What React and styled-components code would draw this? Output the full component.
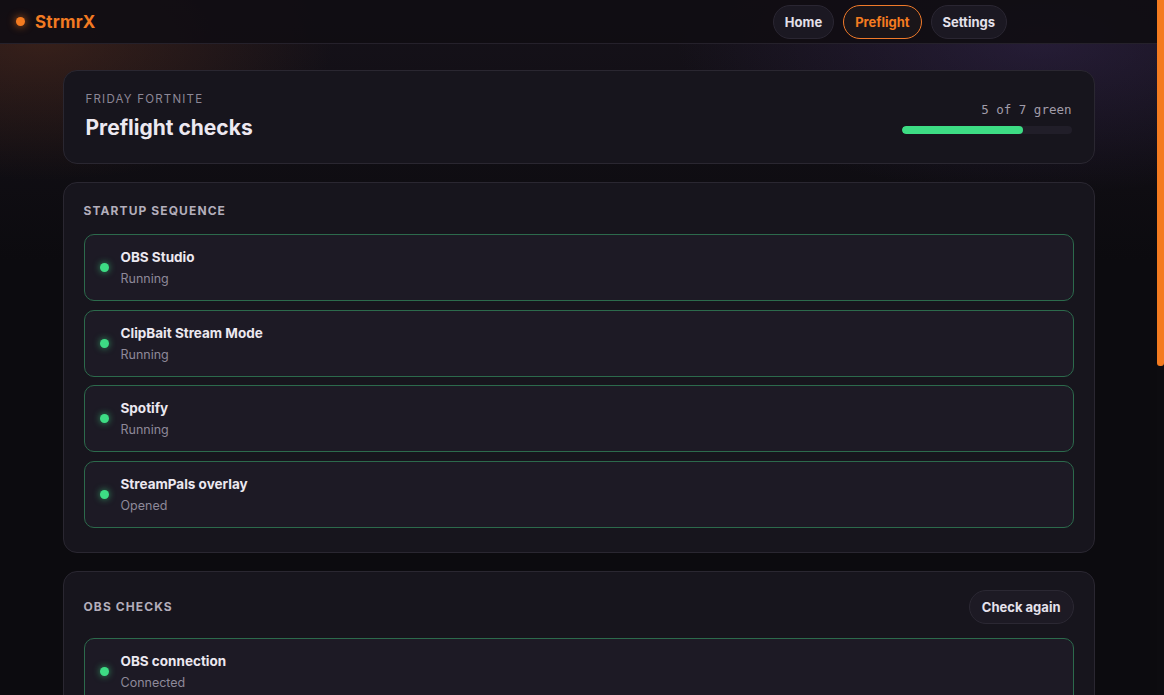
import React from "react";
import styled, { createGlobalStyle } from "styled-components";

const Global = createGlobalStyle`
  html, body { margin: 0; height: 100%; overflow: hidden; background: #0c0b0f; }
  body {
    font-family: Inter, "Liberation Sans", sans-serif;
    color: #ece8f0;
  }
  * { box-sizing: border-box; }
`;

const Frame = styled.div`
  display: flex;
  height: 100vh;
`;

const Shell = styled.div`
  flex: 1;
  min-width: 0;
  overflow-y: auto;
  scrollbar-width: none;
  &::-webkit-scrollbar { display: none; }
  background:
    radial-gradient(ellipse 420px 200px at 40px 40px, rgba(120, 60, 30, 0.35), transparent 70%),
    radial-gradient(ellipse 520px 220px at 1040px 40px, rgba(70, 50, 110, 0.35), transparent 70%),
    linear-gradient(180deg, #16121a 0px, #0c0b0f 260px, #0c0b0f 100%);
`;

const Rail = styled.div`
  width: 7px;
  flex: none;
  background: #0d0c10;
`;

const Thumb = styled.div`
  height: 366px;
  background: #f47b20;
  border-radius: 0 0 3px 3px;
`;

const Header = styled.header`
  height: 44px;
  display: flex;
  align-items: center;
  padding: 0 16px;
  background: rgba(16, 13, 18, 0.92);
  border-bottom: 1px solid #25212b;
`;

const Brand = styled.div`
  display: flex;
  align-items: center;
  gap: 10px;
  font-weight: 700;
  font-size: 17px;
  color: #f27a22;
  letter-spacing: 0.2px;
`;

const BrandDot = styled.span`
  width: 9px;
  height: 9px;
  border-radius: 50%;
  background: #f47b20;
  box-shadow: 0 0 8px rgba(244, 123, 32, 0.8);
`;

const Nav = styled.nav`
  margin-left: auto;
  margin-right: 134px;
  display: flex;
  gap: 9px;
`;

const NavButton = styled.button`
  height: 34px;
  padding: 0 11px;
  border-radius: 17px;
  font-family: inherit;
  font-size: 13px;
  font-weight: 700;
  cursor: pointer;
  background: ${(p) => (p.$active ? "#1a1519" : "#1b1822")};
  color: ${(p) => (p.$active ? "#f47b20" : "#e4e0ea")};
  border: 1px solid ${(p) => (p.$active ? "#f07a2a" : "#2a2632")};
`;

const Main = styled.main`
  max-width: 1032px;
  margin: 0 auto;
  padding: 26px 0 40px;
  display: flex;
  flex-direction: column;
  gap: 18px;
`;

const Card = styled.section`
  background: #17151d;
  border: 1px solid #2a2731;
  border-radius: 14px;
  padding: ${(p) => p.$pad || "20px 20px 24.5px"};
`;

const HeroRow = styled.div`
  display: flex;
  justify-content: space-between;
  align-items: flex-end;
`;

const Eyebrow = styled.div`
  font-size: 11.5px;
  letter-spacing: 1.2px;
  color: #8c8796;
  text-transform: uppercase;
  margin-bottom: 9px;
`;

const Title = styled.h1`
  margin: 0;
  font-size: 21px;
  font-weight: 700;
  color: #ece8f0;
`;

const ProgressBox = styled.div`
  display: flex;
  flex-direction: column;
  align-items: flex-end;
  gap: 9px;
  padding-bottom: 6px;
`;

const ProgressText = styled.div`
  font-family: "DejaVu Sans Mono", "Liberation Mono", monospace;
  font-size: 12.5px;
  color: #a19ca9;
`;

const Track = styled.div`
  width: 170px;
  height: 8px;
  border-radius: 4px;
  background: #211e29;
  overflow: hidden;
`;

const Fill = styled.div`
  height: 100%;
  border-radius: 4px;
  background: #3ddc84;
`;

const SectionHead = styled.div`
  display: flex;
  justify-content: space-between;
  align-items: center;
  margin-bottom: ${(p) => (p.$withAction ? "14px" : "15px")};
  line-height: 16px;
`;

const SectionTitle = styled.h2`
  margin: 0;
  font-size: 12px;
  font-weight: 700;
  letter-spacing: 1.1px;
  text-transform: uppercase;
  color: #b3aebb;
`;

const GhostButton = styled.button`
  height: 34px;
  padding: 0 12px;
  border-radius: 17px;
  background: #1d1a24;
  border: 1px solid #2b2833;
  color: #e6e2ec;
  font-family: inherit;
  font-size: 13px;
  font-weight: 700;
  cursor: pointer;
`;

const List = styled.div`
  display: flex;
  flex-direction: column;
  gap: 8.5px;
`;

const colors = {
  ok: { dot: "#3ddc84", border: "#2c6a4c" },
  warn: { dot: "#f5b83d", border: "#6a5428" },
  bad: { dot: "#ef5a5a", border: "#6a2d33" },
};

const Item = styled.div`
  height: 67px;
  display: flex;
  align-items: center;
  gap: 12px;
  padding: 0 15px;
  background: #1d1a25;
  border: 1px solid ${(p) => colors[p.$state].border};
  border-radius: 10px;
`;

const Dot = styled.span`
  width: 9px;
  height: 9px;
  border-radius: 50%;
  flex: none;
  background: ${(p) => colors[p.$state].dot};
  box-shadow: 0 0 7px ${(p) => colors[p.$state].dot}aa;
`;

const ItemText = styled.div`
  display: flex;
  flex-direction: column;
  gap: 6px;
`;

const ItemTitle = styled.div`
  font-size: 13.5px;
  font-weight: 700;
  color: #ece8f0;
`;

const ItemSub = styled.div`
  font-size: 12.5px;
  color: #8e8999;
`;

const startup = [
  ["OBS Studio", "Running"],
  ["ClipBait Stream Mode", "Running"],
  ["Spotify", "Running"],
  ["StreamPals overlay", "Opened"],
];

const obs = [
  ["OBS connection", "Connected", "ok"],
  ["Scene “Fortnite Gameplay”", "Missing source: Game Capture", "warn"],
  ["Microphone", "Muted", "bad"],
];

const manual = [
  ["Water bottle filled", "Manual"],
  ["Phone on do not disturb", "Manual"],
  ["Stream title updated", "Manual"],
  ["Discord announcement posted", "Manual"],
];

function Row({ title, sub, state = "ok" }) {
  return (
    <Item $state={state}>
      <Dot $state={state} />
      <ItemText>
        <ItemTitle>{title}</ItemTitle>
        <ItemSub>{sub}</ItemSub>
      </ItemText>
    </Item>
  );
}

export default function App() {
  return (
    <Frame>
      <Global />
      <Shell>
        <Header>
          <Brand>
            <BrandDot />
            StrmrX
          </Brand>
          <Nav>
            <NavButton>Home</NavButton>
            <NavButton $active>Preflight</NavButton>
            <NavButton>Settings</NavButton>
          </Nav>
        </Header>
        <Main>
          <Card $pad="21px 22px 23px">
            <HeroRow>
              <div>
                <Eyebrow>Friday Fortnite</Eyebrow>
                <Title>Preflight checks</Title>
              </div>
              <ProgressBox>
                <ProgressText>5 of 7 green</ProgressText>
                <Track>
                  <Fill style={{ width: `${(5 / 7) * 100}%` }} />
                </Track>
              </ProgressBox>
            </HeroRow>
          </Card>
          <Card>
            <SectionHead>
              <SectionTitle>Startup sequence</SectionTitle>
            </SectionHead>
            <List>
              {startup.map(([t, s]) => (
                <Row key={t} title={t} sub={s} />
              ))}
            </List>
          </Card>
          <Card $pad="18px 20px 26px">
            <SectionHead $withAction>
              <SectionTitle>OBS checks</SectionTitle>
              <GhostButton>Check again</GhostButton>
            </SectionHead>
            <List>
              {obs.map(([t, s, st]) => (
                <Row key={t} title={t} sub={s} state={st} />
              ))}
            </List>
          </Card>
          <Card>
            <SectionHead>
              <SectionTitle>Manual checklist</SectionTitle>
            </SectionHead>
            <List>
              {manual.map(([t, s]) => (
                <Row key={t} title={t} sub={s} />
              ))}
            </List>
          </Card>
        </Main>
      </Shell>
      <Rail>
        <Thumb />
      </Rail>
    </Frame>
  );
}
